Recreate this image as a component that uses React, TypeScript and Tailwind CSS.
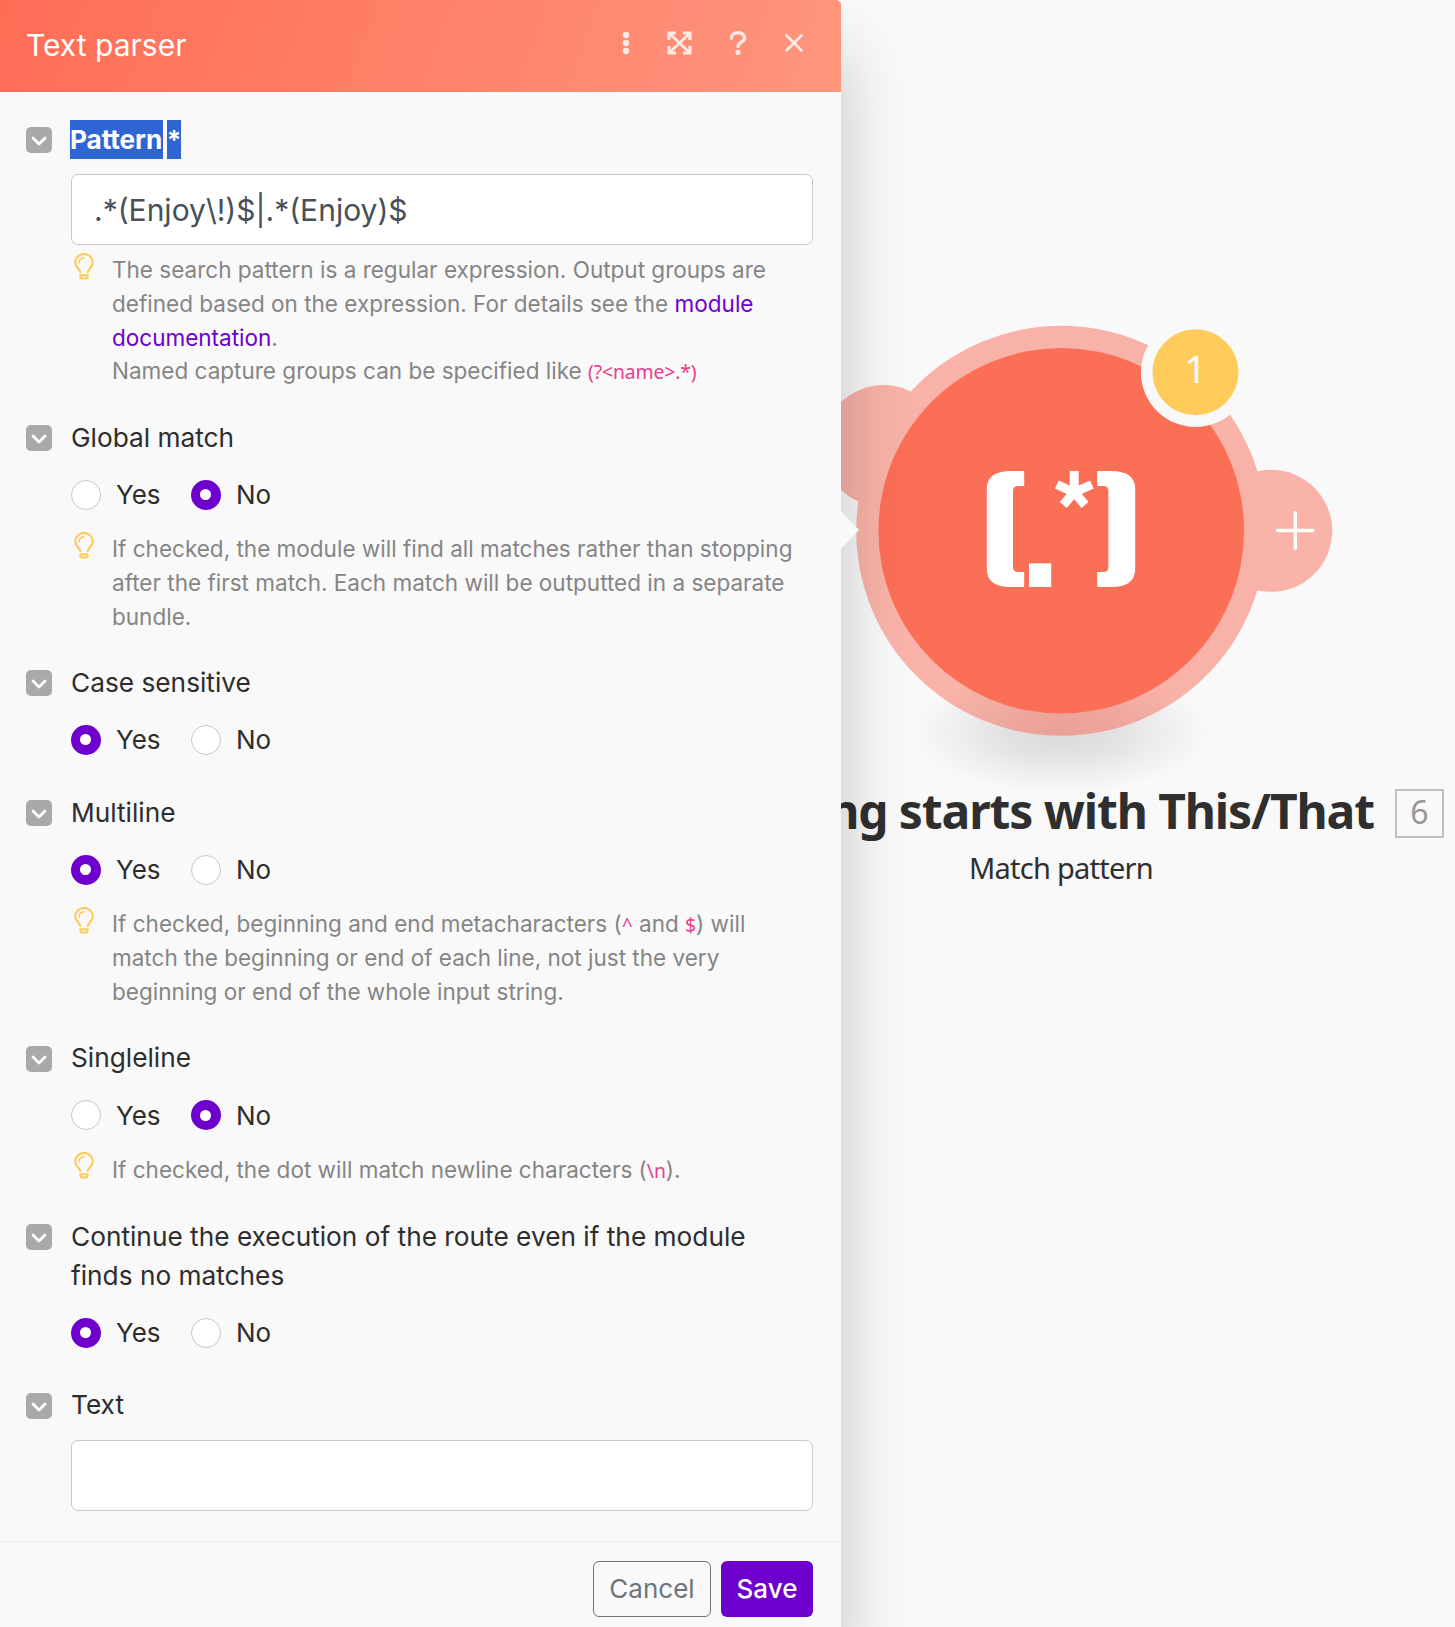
import React from "react";

function Bulb() {
  return (
    <svg className="-mt-[0.5px] h-[27px] w-[20px] shrink-0" viewBox="0 0 20 27" fill="none" stroke="#ffc95c" strokeWidth="2.1" strokeLinecap="round" strokeLinejoin="round">
      <path d="M6.3 19.3 C6.1 16 1.2 14.5 1.2 9.4 A8.8 8.5 0 0 1 18.8 9.4 C18.8 14.5 13.9 16 13.7 19.3" />
      <path d="M5 9.6 A5 4.8 0 0 1 9.8 4.9" strokeWidth="1.7" />
      <path d="M6.3 22.3 H13.7 V23.2 Q13.7 25.6 11.3 25.6 H8.7 Q6.3 25.6 6.3 23.2 Z" strokeWidth="2" />
    </svg>
  );
}

function Field({ label, children, className = "" }: { label: React.ReactNode; children: React.ReactNode; className?: string }) {
  return (
    <section className={`flex ${className}`}>
      <div className="mt-[7px] flex h-[26px] w-[26px] shrink-0 items-center justify-center rounded-[5px] bg-[#a9a9a9]">
        <svg className="mt-[2px] h-[10px] w-[16px]" viewBox="0 0 16 10" fill="none" stroke="#fff" strokeWidth="2.8" strokeLinecap="round" strokeLinejoin="round">
          <path d="M2 2 L8 8 L14 2" />
        </svg>
      </div>
      <div className="ml-[19px] flex w-[742px] flex-col">
        <div className="-mt-[0.5px] mb-[0.5px] text-[26.25px] leading-[39px] text-[#2d2d2d]">{label}</div>
        {children}
      </div>
    </section>
  );
}

function Radio({ on, text }: { on: boolean; text: string }) {
  return (
    <label className="flex w-[120px] items-center">
      <span className={on ? "flex h-[30px] w-[30px] items-center justify-center rounded-full bg-[#6d00cc]" : "h-[30px] w-[30px] rounded-full border border-[#c9c5cc] bg-white"}>
        {on && <span className="mr-px h-[11px] w-[11px] rounded-full bg-white" />}
      </span>
      <span className="ml-[15px] text-[26px] leading-[39px] text-[#2d2d2d]">{text}</span>
    </label>
  );
}

function YesNo({ value }: { value: boolean }) {
  return (
    <div className="mt-[18px] flex">
      <Radio on={value} text="Yes" />
      <Radio on={!value} text="No" />
    </div>
  );
}

function Hint({ children, className = "" }: { children: React.ReactNode; className?: string }) {
  return (
    <div className={`flex pl-[3px] ${className}`}>
      <Bulb />
      <p className="ml-[18px] text-[22.53px] leading-[33.75px] whitespace-nowrap text-[#858585]">{children}</p>
    </div>
  );
}

function Code({ children }: { children: React.ReactNode }) {
  return <code className="font-['Noto_Sans',sans-serif] text-[19.4px] leading-none tracking-[-0.15px] text-[#e83e8c]">{children}</code>;
}

function Header() {
  return (
    <header className="flex h-[92px] items-center rounded-tr-[5px] bg-[linear-gradient(110deg,#ff6d55_0%,#ff957d_100%)] pr-[38px] pl-[26px] text-white">
      <h1 className="mb-[2px] grow text-[30px]">Text parser</h1>
      <div className="mb-[6px] flex items-center">
        <svg className="h-[24px] w-[8px]" viewBox="0 0 8 24" fill="#ffe9e4">
          <circle cx="4" cy="4" r="3.3" />
          <circle cx="4" cy="12" r="3.3" />
          <circle cx="4" cy="20" r="3.3" />
        </svg>
        <svg className="ml-[37px] h-[24px] w-[25px]" viewBox="0 0 25 24" fill="none" stroke="#ffe9e4" strokeWidth="3.2">
          <path d="M2 9 V2 H9 M16 2 H23 V9 M23 15 V22 H16 M9 22 H2 V15" />
          <path d="M2.5 2.5 L22.5 21.5 M22.5 2.5 L2.5 21.5" strokeWidth="2.9" />
        </svg>
        <svg className="ml-[37px] h-[24px] w-[18px]" viewBox="0 0 18 24" fill="none" stroke="#ffe9e4" strokeWidth="3.4" strokeLinecap="round">
          <path d="M2.5 7 C2.5 3.5 5 1.8 9 1.8 C13 1.8 15.6 4 15.6 7 C15.6 11.5 9 10.8 9 15.6" />
          <circle cx="9" cy="21.3" r="2.6" fill="#ffe9e4" stroke="none" />
        </svg>
        <svg className="ml-[38px] h-[18px] w-[18px]" viewBox="0 0 18 18" fill="none" stroke="#ffe9e4" strokeWidth="2.8" strokeLinecap="round">
          <path d="M1.5 1.5 L16.5 16.5 M16.5 1.5 L1.5 16.5" />
        </svg>
      </div>
    </header>
  );
}

function Panel() {
  return (
    <aside className="relative z-10 flex h-[1627px] w-[841px] shrink-0 flex-col rounded-tr-[5px] bg-[#f9f9f9] font-['Inter',sans-serif] shadow-[0_52px_70px_rgba(0,0,0,0.22)]">
      <Header />
      <div className="flex h-[1449px] flex-col pt-[28px] pl-[26px]">
        <Field
          label={
            <span className="-ml-px flex gap-[4px] font-bold text-white">
              <span className="w-[93px] bg-[#2f64d3] tracking-[-0.1px] whitespace-nowrap">Pattern</span>
              <span className="flex w-[14px] justify-center bg-[#2f64d3]">*</span>
            </span>
          }
        >
          <div className="mt-[15px] flex h-[71px] items-center rounded-[7px] border border-[#cac7cc] bg-white px-[22px] pt-[2px] text-[30px] text-[#495057]">
            {".*(Enjoy\\!)$|.*(Enjoy)$"}
          </div>
          <Hint className="mt-[8.2px]">
            The search pattern is a regular expression. Output groups are
            <br />
            defined based on the expression. For details see the <span className="text-[#6d00cc]">module</span>
            <br />
            <span className="text-[#6d00cc]">documentation</span>.
            <br />
            Named capture groups can be specified like <Code>{"(?<name>.*)"}</Code>
          </Hint>
        </Field>
        <Field label="Global match" className="mt-[30px]">
          <YesNo value={false} />
          <Hint className="mt-[18px]">
            If checked, the module will find all matches rather than stopping
            <br />
            after the first match. Each match will be outputted in a separate
            <br />
            bundle.
          </Hint>
        </Field>
        <Field label="Case sensitive" className="mt-[30px]">
          <YesNo value={true} />
        </Field>
        <Field label="Multiline" className="mt-[33.7px]">
          <YesNo value={true} />
          <Hint className="mt-[18px]">
            If checked, beginning and end metacharacters (<Code>^</Code> and <Code>$</Code>) will
            <br />
            match the beginning or end of each line, not just the very
            <br />
            beginning or end of the whole input string.
          </Hint>
        </Field>
        <Field label="Singleline" className="mt-[30.5px]">
          <YesNo value={false} />
          <Hint className="mt-[18px]">
            If checked, the dot will match newline characters (<Code>\n</Code>).
          </Hint>
        </Field>
        <Field
          label={
            <>
              Continue the execution of the route even if the module
              <br />
              finds no matches
            </>
          }
          className="mt-[30.8px]"
        >
          <YesNo value={true} />
        </Field>
        <Field label="Text" className="mt-[33.2px]">
          <div className="mt-[15px] h-[71px] rounded-[7px] border border-[#cac7cc] bg-white" />
        </Field>
      </div>
      <footer className="flex grow items-start justify-end gap-[10px] border-t border-[#ececee] pt-[19px] pr-[28px] text-[26px]">
        <button className="h-[56px] w-[118px] rounded-[6px] border border-[#6c757d] pb-[2px] text-[#6c757d]">Cancel</button>
        <button className="h-[56px] w-[92px] rounded-[6px] bg-[#6d00cc] pb-[2px] font-medium text-white">Save</button>
      </footer>
      <svg className="absolute top-[511px] left-[841px] h-[38px] w-[18px]" viewBox="0 0 18 38">
        <path d="M0 0 L18 19 L0 38 Z" fill="#f9f9f9" />
      </svg>
    </aside>
  );
}

function Canvas() {
  return (
    <main className="relative w-[614px] font-['Noto_Sans',sans-serif]">
      <svg className="absolute top-[300px] left-0 h-[520px] w-[614px]" viewBox="841 300 614 520">
        <defs>
          <radialGradient id="ground">
            <stop offset="0" stopColor="#000" stopOpacity="0.13" />
            <stop offset="0.4" stopColor="#000" stopOpacity="0.09" />
            <stop offset="0.75" stopColor="#000" stopOpacity="0.035" />
            <stop offset="1" stopColor="#000" stopOpacity="0" />
          </radialGradient>
        </defs>
        <ellipse cx="1061" cy="732" rx="150" ry="62" fill="url(#ground)" />
        <g fill="#fb6a55" opacity="0.49">
          <circle cx="883.5" cy="446" r="61" />
          <circle cx="1271.2" cy="530.8" r="61" />
          <circle cx="1061.2" cy="530.8" r="205" />
        </g>
        <circle cx="1061.2" cy="530.8" r="182.8" fill="#fc6f57" />
        <circle cx="1195.5" cy="372.3" r="54.6" fill="#f9f9f9" />
        <circle cx="1195.5" cy="372.3" r="43" fill="#ffcb5b" />
        <path d="M1277.5 530.5 H1313 M1295.3 512.8 V548.2" stroke="#fff" strokeWidth="3.4" strokeLinecap="round" />
        <g fill="#fff">
          <path d="M1024.2 471 V486 H1018 Q1013 486 1013 491 V567 Q1013 572 1018 572 H1024.2 V587 H1011 Q986.8 587 986.8 569 V489 Q986.8 471 1011 471 Z" />
          <path d="M1097.2 471 V486 H1103.5 Q1108.4 486 1108.4 491 V567 Q1108.4 572 1103.5 572 H1097.2 V587 H1111 Q1135.2 587 1135.2 569 V489 Q1135.2 471 1111 471 Z" />
          <rect x="1029" y="563.3" width="22.2" height="23.7" />
        </g>
        <path d="M1074.2 492.5 V471 M1074.2 492.5 L1056.8 484.5 M1074.2 492.5 L1091.8 484.5 M1074.2 492 L1063.3 505 M1074.2 492 L1085 505" stroke="#fff" strokeWidth="9" />
      </svg>
      <div className="absolute top-[338px] left-[312px] flex h-[60px] w-[85px] items-center justify-center text-[39px] text-white">1</div>
      <div className="absolute top-[776px] right-[81px] text-[48px] leading-[70px] font-bold tracking-[-1.1px] whitespace-nowrap text-[#2f2f2f]">ng starts with This/That</div>
      <div className="absolute top-[789px] left-[554px] flex h-[49px] w-[49px] items-center justify-center border-2 border-[#c0c0c0] pb-[4px] text-[32px] leading-none text-[#979797]">6</div>
      <div className="absolute top-[847px] left-[20px] w-[400px] text-center text-[29px] leading-[42px] tracking-[-0.75px] text-[#2f2f2f]">Match pattern</div>
    </main>
  );
}

export default function App() {
  return (
    <div className="flex h-[1627px] w-[1455px] overflow-hidden bg-[#f9f9f9]">
      <Panel />
      <Canvas />
    </div>
  );
}
